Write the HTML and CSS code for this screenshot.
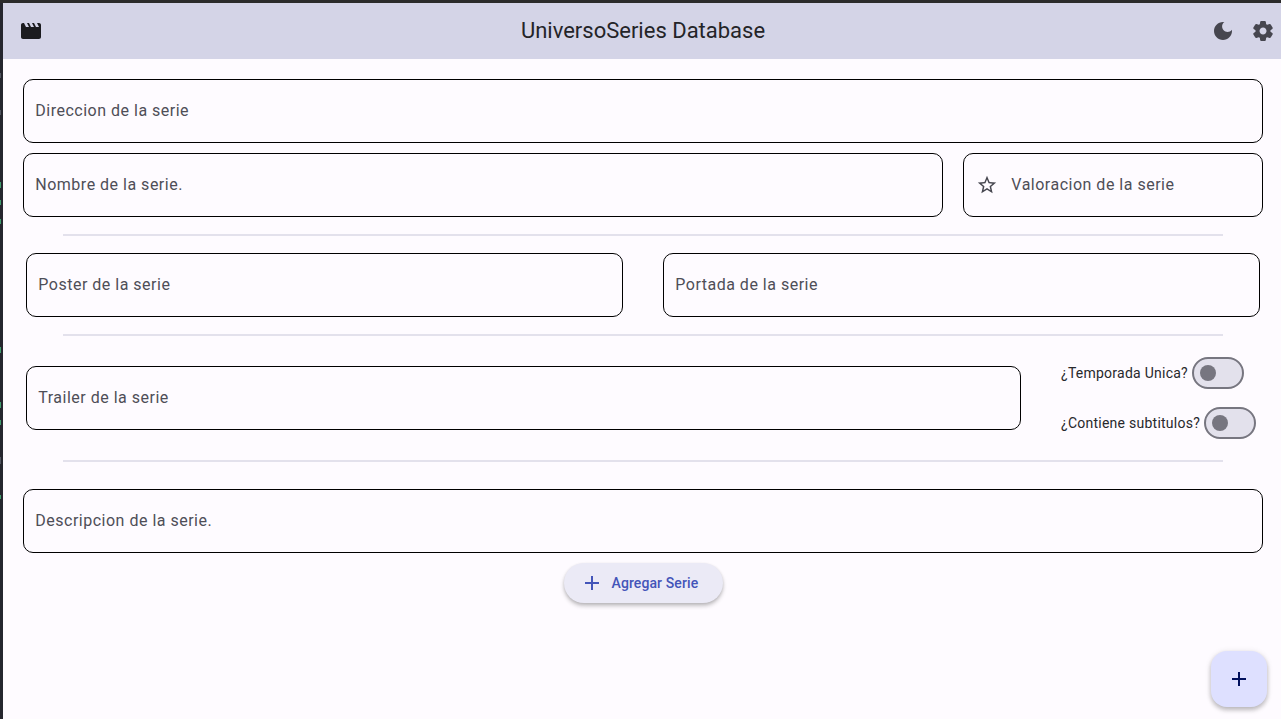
FILE: index.html
```html
<!DOCTYPE html>
<html lang="es">
<head>
<meta charset="utf-8">
<title>UniversoSeries Database</title>
<link rel="stylesheet" href="styles.css">
</head>
<body>
<div class="window">
  <header class="appbar">
    <svg class="icon icon-movie" viewBox="0 0 24 24"><path d="M18 4l2 4h-3l-2-4h-2l2 4h-3l-2-4H8l2 4H7L5 4H4c-1.100 0-1.990.9-1.990 2L2 18c0 1.100.9 2 2 2h16c1.100 0 2-.9 2-2V6c0-1.100-.9-2-2-2z"/></svg>
    <h1 class="title">UniversoSeries Database</h1>
    <div class="actions">
      <svg class="icon" viewBox="0 0 24 24"><path d="M12 3c-4.970 0-9 4.030-9 9s4.030 9 9 9 9-4.030 9-9c0-.46-.04-.92-.1-1.360-.98 1.370-2.580 2.260-4.400 2.260-2.980 0-5.400-2.420-5.400-5.400 0-1.810.89-3.420 2.260-4.400C12.920 3.040 12.460 3 12 3z"/></svg>
      <svg class="icon" viewBox="0 0 24 24"><path d="M19.500 12c0-.23-.01-.45-.03-.68l1.860-1.410c.4-.3.51-.86.26-1.300l-1.870-3.230c-.25-.44-.79-.62-1.250-.42l-2.150.91c-.37-.26-.76-.49-1.170-.68l-.29-2.310C14.800 2.380 14.370 2 13.870 2h-3.730c-.51 0-.94.38-1 .88l-.29 2.310c-.41.19-.8.42-1.170.68l-2.150-.91c-.46-.2-1-.02-1.250.42L2.410 8.620c-.25.44-.14.99.26 1.300l1.860 1.410c-.02.22-.03.44-.03.67s.01.45.03.68l-1.860 1.410c-.4.3-.51.86-.26 1.300l1.870 3.230c.25.44.79.62 1.250.42l2.150-.91c.37.26.76.49 1.170.68l.29 2.310c.06.5.49.88.99.88h3.730c.5 0 .93-.38.99-.88l.29-2.310c.41-.19.8-.42 1.170-.68l2.150.91c.46.2 1 .02 1.250-.42l1.870-3.230c.25-.44.14-.99-.26-1.300l-1.860-1.410c.03-.23.04-.45.04-.68zm-7.460 3.500c-1.930 0-3.500-1.570-3.500-3.500s1.570-3.500 3.500-3.500 3.500 1.570 3.500 3.500-1.570 3.500-3.500 3.500z"/></svg>
    </div>
  </header>
  <main class="form">
    <div class="field">Direccion de la serie</div>
    <div class="row row-name">
      <div class="field">Nombre de la serie.</div>
      <div class="field field-rating">
        <svg class="star" viewBox="0 0 24 24"><path d="M22 9.240l-7.190-.62L12 2 9.190 8.630 2 9.240l5.460 4.730L5.820 21 12 17.270 18.180 21l-1.630-7.030L22 9.240zM12 15.400l-3.760 2.270 1-4.280-3.320-2.880 4.380-.38L12 6.100l1.710 4.040 4.380.38-3.320 2.880 1 4.280L12 15.400z"/></svg>
        <span>Valoracion de la serie</span>
      </div>
    </div>
    <div class="divider"></div>
    <div class="row row-images">
      <div class="field">Poster de la serie</div>
      <div class="field">Portada de la serie</div>
    </div>
    <div class="divider"></div>
    <div class="row row-trailer">
      <div class="field">Trailer de la serie</div>
      <div class="switches">
        <div class="option"><span>¿Temporada Unica?</span><span class="switch"></span></div>
        <div class="option"><span>¿Contiene subtitulos?</span><span class="switch"></span></div>
      </div>
    </div>
    <div class="divider"></div>
    <div class="field field-description">Descripcion de la serie.</div>
    <button class="add-button">
      <svg class="add-icon" viewBox="0 0 24 24"><path d="M19 13h-6v6h-2v-6H5v-2h6V5h2v6h6v2z"/></svg>
      <span>Agregar Serie</span>
    </button>
  </main>
  <button class="fab"><svg class="icon" viewBox="0 0 24 24"><path d="M19 13h-6v6h-2v-6H5v-2h6V5h2v6h6v2z"/></svg></button>
</div>
</body>
</html>
```
FILE: styles.css
```css
* { box-sizing: border-box; }

body {
  margin: 0;
  height: 719px;
  overflow: hidden;
  padding: 3px 0 0 3px;
  background-color: #25262e;
  background-image:
    linear-gradient(#3f9b6c, #3f9b6c), linear-gradient(#3f9b6c, #3f9b6c),
    linear-gradient(#3f9b6c, #3f9b6c), linear-gradient(#3f9b6c, #3f9b6c),
    linear-gradient(#3f9b6c, #3f9b6c), linear-gradient(#3f9b6c, #3f9b6c),
    linear-gradient(#3f9b6c, #3f9b6c), linear-gradient(#50545f, #50545f),
    linear-gradient(#50545f, #50545f), linear-gradient(#50545f, #50545f),
    linear-gradient(#2b2b2b, #2b2b2b);
  background-repeat: no-repeat;
  background-size: 1px 6px, 1px 5px, 1px 5px, 1px 6px, 1px 6px, 1px 5px, 1px 4px, 1px 5px, 1px 5px, 1px 7px, 100% 3px;
  background-position: 0 182px, 0 200px, 0 219px, 0 347px, 0 402px, 0 420px, 0 495px, 0 73px, 0 110px, 0 457px, 0 0;
  font-family: Roboto, "Liberation Sans", sans-serif;
  color: #1b1b1f;
}

.window {
  height: 716px;
  background: #fefbff;
}

.icon {
  display: block;
  width: 24px;
  height: 24px;
  fill: currentColor;
}

.appbar {
  display: grid;
  grid-template-columns: 82px 1fr 80px;
  align-items: center;
  height: 56px;
  background: #d4d4e7;
}

.icon-movie { margin-left: 16px; }

.title {
  margin: 0;
  text-align: center;
  font-size: 22px;
  line-height: 28px;
  font-weight: 400;
  color: #242428;
}

.actions {
  display: flex;
  gap: 16px;
  padding-left: 10px;
  color: #46464f;
}

.form {
  display: flex;
  flex-direction: column;
  padding: 20px 18px 0 20px;
}

.field {
  display: flex;
  align-items: center;
  height: 64px;
  padding: 0 11.3px;
  border: 1px solid #000;
  border-radius: 10px;
  color: #4e4e57;
  font-size: 16px;
  line-height: 24px;
  letter-spacing: 0.5px;
}

.row { display: grid; }

.row-name {
  grid-template-columns: 920px 300px;
  gap: 20px;
  margin-top: 10px;
}

.field-rating { gap: 13.3px; padding-left: 12px; }

.star {
  width: 22px;
  height: 22px;
  fill: #46464f;
}

.divider {
  height: 2px;
  margin: 17px 40px;
  background: #e3e1ec;
}

.row-images {
  grid-template-columns: 1fr 1fr;
  gap: 40px;
  padding: 0 3px;
}

.row-trailer {
  grid-template-columns: 995px 1fr;
  gap: 40px;
  align-items: center;
  height: 90px;
  padding-left: 3px;
}

.switches {
  display: flex;
  flex-direction: column;
  gap: 18px;
}

.option {
  display: flex;
  align-items: center;
  gap: 4px;
  font-size: 14px;
  line-height: 20px;
  letter-spacing: 0.25px;
  white-space: nowrap;
  color: #28282c;
}

.switch {
  display: flex;
  align-items: center;
  flex: none;
  width: 52px;
  height: 32px;
  padding-left: 6px;
  border: 2px solid #777680;
  border-radius: 16px;
  background: #e3e1ec;
}

.switch::before {
  content: "";
  width: 16px;
  height: 16px;
  border-radius: 50%;
  background: #777680;
}

.field-description { margin-top: 10px; }

.add-button {
  display: flex;
  align-items: center;
  align-self: center;
  gap: 8px;
  width: 159px;
  height: 40px;
  margin-top: 10px;
  padding: 0 0 0 16px;
  border: 0;
  border-radius: 20px;
  background: #ebeaf6;
  box-shadow: 0 3px 4px rgba(0, 0, 0, 0.22), 0 1px 3px rgba(0, 0, 0, 0.1);
  color: #4355b9;
  font: 500 14px/20px Roboto, "Liberation Sans", sans-serif;
  letter-spacing: 0.1px;
}

.add-icon { width: 24px; height: 24px; fill: currentColor; }

.fab {
  position: fixed;
  right: 14px;
  bottom: 12px;
  display: grid;
  place-items: center;
  width: 56px;
  height: 56px;
  padding: 0;
  border: 0;
  border-radius: 16px;
  background: #dee0ff;
  box-shadow: 0 3px 5px rgba(0, 0, 0, 0.22), 0 1px 6px rgba(0, 0, 0, 0.12);
  color: #00105c;
}
```
